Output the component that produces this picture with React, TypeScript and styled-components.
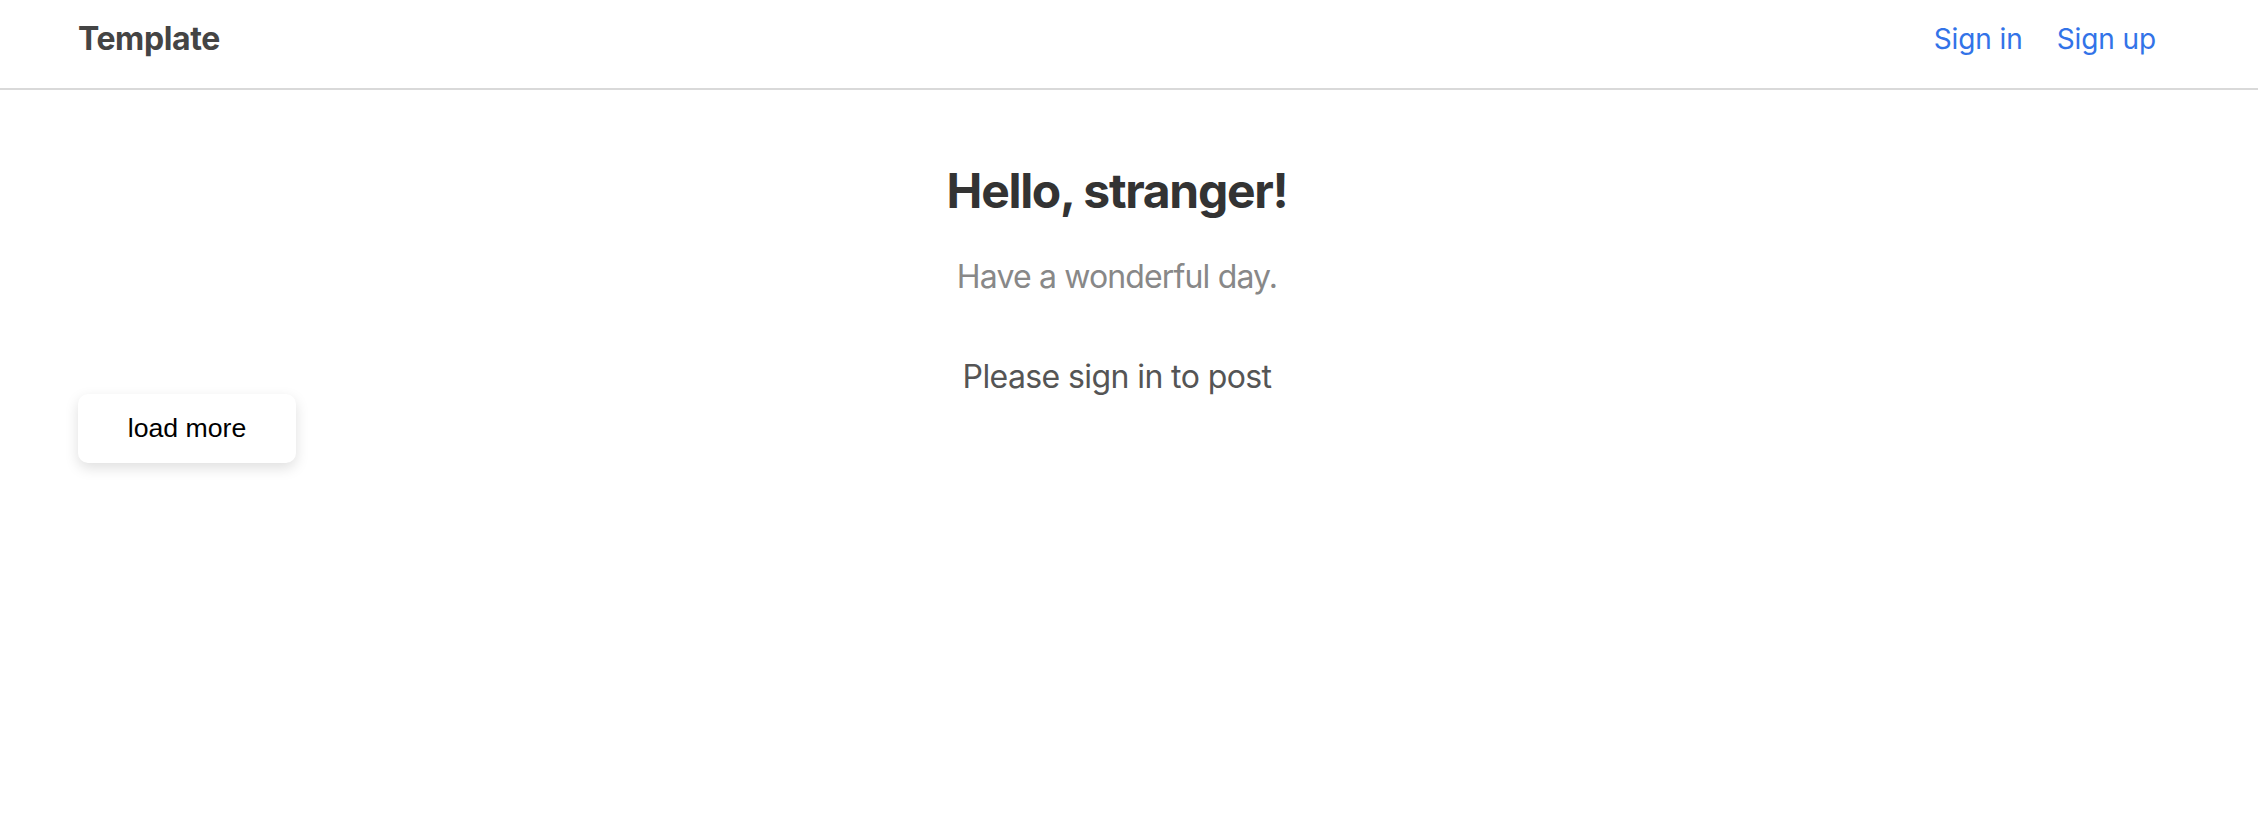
import React from "react";
import styled, { createGlobalStyle } from "styled-components";

const GlobalStyle = createGlobalStyle`
  html, body {
    margin: 0;
    padding: 0;
    background: #ffffff;
  }
  body {
    font-family: Inter, "Noto Sans", "Liberation Sans", sans-serif;
    -webkit-font-smoothing: antialiased;
  }
`;

const Page = styled.div`
  display: flex;
  flex-direction: column;
  min-height: 838px;
`;

const Header = styled.header`
  display: flex;
  justify-content: space-between;
  align-items: flex-start;
  height: 88px;
  padding: 0 102px 0 78px;
  border-bottom: 2px solid #d9d9d9;
  box-sizing: content-box;
`;

const Brand = styled.a`
  margin-top: 19px;
  font-size: 32px;
  font-weight: 700;
  line-height: normal;
  color: #444444;
  text-decoration: none;
  letter-spacing: -0.4px;
`;

const Nav = styled.nav`
  display: flex;
  gap: 34px;
  margin-top: 22px;
`;

const NavLink = styled.a`
  font-size: 28px;
  line-height: normal;
  color: #3273e8;
  text-decoration: none;
  letter-spacing: -0.1px;
`;

const Main = styled.main`
  display: flex;
  flex-direction: column;
  padding: 0 102px 0 78px;
`;

const Intro = styled.section`
  display: flex;
  flex-direction: column;
  align-items: center;
  text-align: center;
`;

const Title = styled.h1`
  margin: 71px 0 0;
  font-size: 48px;
  font-weight: 700;
  line-height: normal;
  color: #333333;
  letter-spacing: -1.3px;
`;

const Subtitle = styled.p<{ $tone: string; $gap: number; $track: number }>`
  margin: ${(p) => p.$gap}px 0 0;
  font-size: 32px;
  line-height: normal;
  color: ${(p) => p.$tone};
  letter-spacing: ${(p) => p.$track}px;
`;

const LoadMore = styled.button`
  align-self: flex-start;
  width: 218px;
  height: 69px;
  margin-top: -2px;
  border: none;
  border-radius: 10px;
  background: #ffffff;
  box-shadow: 0 5px 14px rgba(0, 0, 0, 0.13);
  font-family: "Liberation Sans", Arial, sans-serif;
  font-size: 26.67px;
  color: #000000;
  cursor: pointer;
`;

export default function App() {
  return (
    <Page>
      <GlobalStyle />
      <Header>
        <Brand href="#">Template</Brand>
        <Nav>
          <NavLink href="#">Sign in</NavLink>
          <NavLink href="#">Sign up</NavLink>
        </Nav>
      </Header>
      <Main>
        <Intro>
          <Title>Hello, stranger!</Title>
          <Subtitle $tone="#888888" $gap={37} $track={-0.85}>
            Have a wonderful day.
          </Subtitle>
          <Subtitle $tone="#555555" $gap={61} $track={-0.6}>
            Please sign in to post
          </Subtitle>
        </Intro>
        <LoadMore>load more</LoadMore>
      </Main>
    </Page>
  );
}
